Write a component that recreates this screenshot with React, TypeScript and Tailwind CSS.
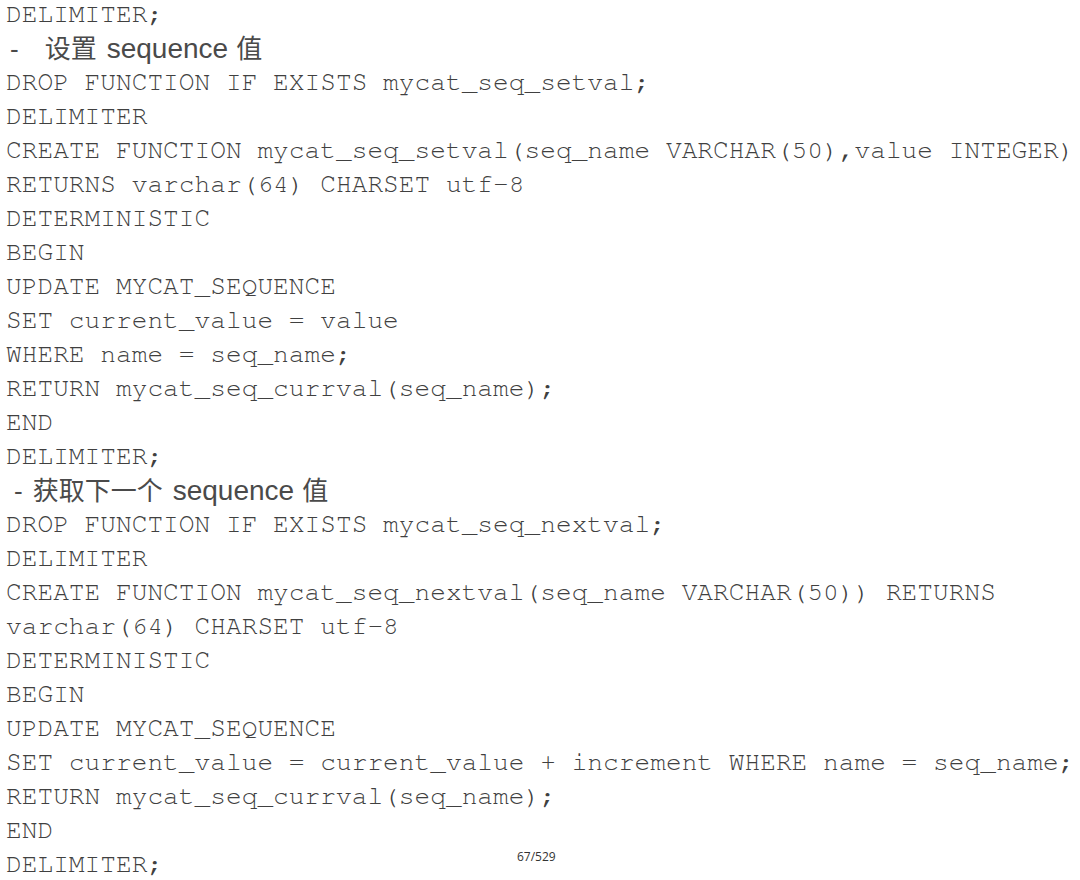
const mono = "font-['Nimbus_Mono_PS','Nimbus_Mono_L','FreeMono','Courier_New','Liberation_Mono',monospace]"
const cjk = "font-['Liberation_Sans','Noto_Sans_CJK_SC',sans-serif]"

type Line = string | { dash: string; zh: string; gap?: boolean }

const lines: Line[] = [
  'DELIMITER;',
  { dash: '-', zh: '设置', gap: true },
  'DROP FUNCTION IF EXISTS mycat_seq_setval;',
  'DELIMITER',
  'CREATE FUNCTION mycat_seq_setval(seq_name VARCHAR(50),value INTEGER)',
  'RETURNS varchar(64) CHARSET utf-8',
  'DETERMINISTIC',
  'BEGIN',
  'UPDATE MYCAT_SEQUENCE',
  'SET current_value = value',
  'WHERE name = seq_name;',
  'RETURN mycat_seq_currval(seq_name);',
  'END',
  'DELIMITER;',
  { dash: '-', zh: '获取下一个' },
  'DROP FUNCTION IF EXISTS mycat_seq_nextval;',
  'DELIMITER',
  'CREATE FUNCTION mycat_seq_nextval(seq_name VARCHAR(50)) RETURNS',
  'varchar(64) CHARSET utf-8',
  'DETERMINISTIC',
  'BEGIN',
  'UPDATE MYCAT_SEQUENCE',
  'SET current_value = current_value + increment WHERE name = seq_name;',
  'RETURN mycat_seq_currval(seq_name);',
  'END',
  'DELIMITER;',
]

export default function App() {
  return (
    <div className="relative w-[1080px] h-[880px] bg-white overflow-hidden text-[#404040]">
      <div className="flex flex-col pl-[6px] -mt-[3px]">
        {lines.map((line, i) =>
          typeof line === 'string' ? (
            <div key={i} className={`${mono} h-[34px] leading-[34px] text-[26.2px] whitespace-pre`}>
              {line}
            </div>
          ) : (
            <div key={i} className={`${cjk} h-[34px] leading-[34px] text-[26px] flex items-center whitespace-pre text-[#4a4a4a] pt-[2px]`}>
              <span className={line.gap ? 'ml-[4px] mr-[26px]' : 'ml-[8px] mr-[10px]'}>{line.dash}</span>
              <span>{line.zh}</span>
              <span className="ml-[10px] text-[28px]">sequence</span>
              <span className="ml-[8px]">值</span>
            </div>
          )
        )}
      </div>
      <div className="absolute left-[517px] top-[848px] font-['Open_Sans',sans-serif] text-[12px] text-[#333]">
        67/529
      </div>
    </div>
  )
}
